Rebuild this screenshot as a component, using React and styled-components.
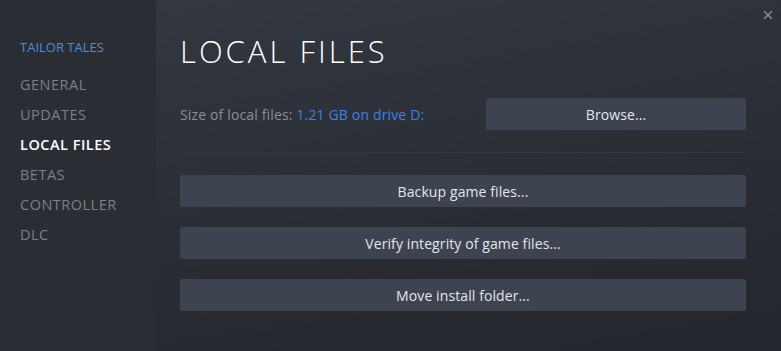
import React from "react";
import styled, { createGlobalStyle } from "styled-components";

const Global = createGlobalStyle`
  html, body { margin: 0; padding: 0; background: #23262d; }
  body { font-family: "Open Sans", "Liberation Sans", sans-serif; }
  * { box-sizing: border-box; }
`;

const Window = styled.div`
  position: relative;
  display: flex;
  width: 781px;
  height: 351px;
  overflow: hidden;
`;

const Sidebar = styled.nav`
  width: 156px;
  flex-shrink: 0;
  background: #2a2d34;
  padding: 39px 0 0 20px;
  display: flex;
  flex-direction: column;
`;

const GameName = styled.div`
  color: #4a8fdb;
  font-size: 13px;
  line-height: 16px;
  margin-bottom: 15px;
`;

const NavItem = styled.div`
  font-size: 14.5px;
  line-height: 30px;
  letter-spacing: 0.5px;
  color: ${(p) => (p.$active ? "#ffffff" : "#7d8086")};
  font-weight: ${(p) => (p.$active ? 600 : 400)};
`;

const Main = styled.main`
  flex: 1;
  background: linear-gradient(170deg, #33373f 0%, #2a2e35 50%, #23262c 100%);
  padding: 33px 35px 0 24px;
  display: flex;
  flex-direction: column;
`;

const Title = styled.h1`
  margin: 0;
  font-family: "Open Sans", sans-serif;
  font-weight: 300;
  font-size: 31px;
  line-height: 36px;
  letter-spacing: 3px;
  color: #ffffff;
`;

const SizeRow = styled.div`
  display: flex;
  align-items: center;
  justify-content: space-between;
  margin-top: 29px;
`;

const SizeText = styled.span`
  font-size: 14px;
  letter-spacing: 0.15px;
  color: #8b8e94;
`;

const SizeValue = styled.span`
  color: #3b82e6;
`;

const Button = styled.button`
  display: block;
  width: ${(p) => p.$width || "100%"};
  height: 32px;
  border: none;
  border-radius: 2px;
  background: #3d4450;
  color: #e4e6ea;
  font-family: "Open Sans", sans-serif;
  font-size: 14px;
  letter-spacing: 0.1px;
  padding: 0;
`;

const Divider = styled.hr`
  border: none;
  height: 1px;
  background: #34373e;
  margin: 22px 0 22px;
`;

const Actions = styled.div`
  display: flex;
  flex-direction: column;
  gap: 20px;
`;

const Close = styled.div`
  position: absolute;
  top: 3px;
  right: 8px;
  width: 10px;
  height: 10px;
`;

export default function App() {
  return (
    <>
      <Global />
      <Window>
        <Sidebar>
          <GameName>TAILOR TALES</GameName>
          <NavItem>GENERAL</NavItem>
          <NavItem>UPDATES</NavItem>
          <NavItem $active>LOCAL FILES</NavItem>
          <NavItem>BETAS</NavItem>
          <NavItem>CONTROLLER</NavItem>
          <NavItem>DLC</NavItem>
        </Sidebar>
        <Main>
          <Title>LOCAL FILES</Title>
          <SizeRow>
            <SizeText>
              Size of local files: <SizeValue>1.21 GB on drive D:</SizeValue>
            </SizeText>
            <Button $width="260px">Browse...</Button>
          </SizeRow>
          <Divider />
          <Actions>
            <Button>Backup game files...</Button>
            <Button>Verify integrity of game files...</Button>
            <Button>Move install folder...</Button>
          </Actions>
        </Main>
        <Close>
          <svg width="10" height="10" viewBox="0 0 10 10">
            <path d="M1 1 L9 9 M9 1 L1 9" stroke="#8a939c" strokeWidth="1.3" />
          </svg>
        </Close>
      </Window>
    </>
  );
}
